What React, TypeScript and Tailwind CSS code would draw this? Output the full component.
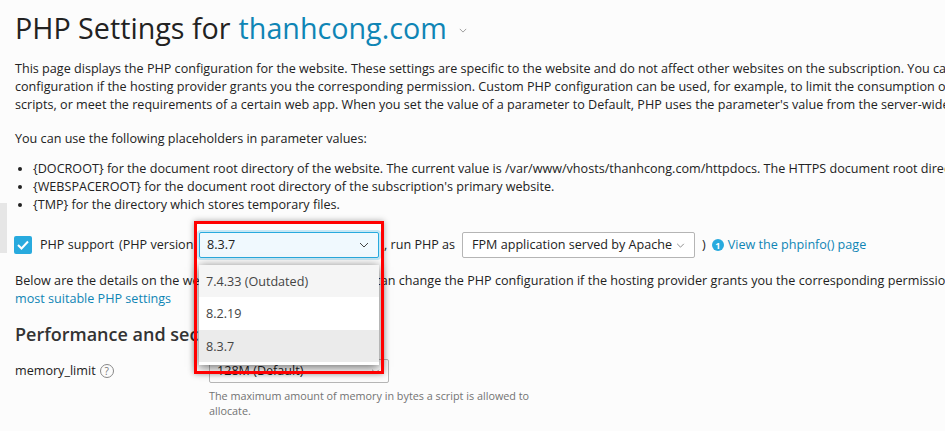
import React from 'react';

const Chevron: React.FC<{ className?: string }> = ({ className }) => (
  <svg className={className} viewBox="0 0 10 6" fill="none" stroke="currentColor" strokeWidth={1}>
    <path d="M1 1l4 4 4-4" />
  </svg>
);

const placeholders = [
  '{DOCROOT} for the document root directory of the website. The current value is /var/www/vhosts/thanhcong.com/httpdocs. The HTTPS document root directory is the same.',
  "{WEBSPACEROOT} for the document root directory of the subscription's primary website.",
  '{TMP} for the directory which stores temporary files.',
];

const VersionMenu: React.FC = () => (
  <>
    <div className="absolute left-[194px] top-[221px] w-[190px] h-[153px] border-[3px] border-[#ff0000] z-30 pointer-events-none shadow-[0_0_6px_rgba(0,0,0,0.35)]" />
    <div className="absolute left-[199px] top-[265px] w-[180px] h-[100px] bg-white z-20 text-[#444] shadow-[0_2px_10px_rgba(0,0,0,0.6)]">
      <div className="h-[32px] bg-[#f5f5f5] pl-[7px] leading-[33px]">7.4.33 (Outdated)</div>
      <div className="h-[33px] pl-[7px] leading-[33px]">8.2.19</div>
      <div className="h-[32px] bg-[#ebebeb] pl-[7px] leading-[33px]">8.3.7</div>
    </div>
  </>
);

export default function App() {
  return (
    <div className="relative w-[945px] h-[431px] overflow-hidden bg-[#fcfcfc] text-[12.6px] leading-[18px] text-[#222] font-['Open_Sans',sans-serif]">
      <div className="absolute left-0 top-[203px] w-[7px] h-[50px] bg-[#e6e6e6]" />
      <div className="pl-[15px] pt-[9px] whitespace-nowrap">
        <h1 className="flex items-center text-[28.7px] leading-[38px] text-[#222]">
          PHP Settings for <span className="ml-[8px] text-[#0f85b5]">thanhcong.com</span>
          <Chevron className="ml-[12px] mt-[5px] w-[8px] h-[5px] text-[#888]" />
        </h1>
        <div className="mt-[13px]">
          <p>This page displays the PHP configuration for the website. These settings are specific to the website and do not affect other websites on the subscription. You can</p>
          <p>configuration if the hosting provider grants you the corresponding permission. Custom PHP configuration can be used, for example, to limit the consumption of</p>
          <p>scripts, or meet the requirements of a certain web app. When you set the value of a parameter to Default, PHP uses the parameter's value from the server-wide</p>
        </div>
        <p className="mt-[16px]">You can use the following placeholders in parameter values:</p>
        <ul className="mt-[12px] list-disc pl-[18px]">
          {placeholders.map((text) => (
            <li key={text}>{text}</li>
          ))}
        </ul>
        <div className="mt-[18px] h-[26px] flex items-center">
          <span className="-ml-px w-[18px] h-[18px] bg-[#28aade] rounded-[2px] flex items-center justify-center">
            <svg className="w-[12px] h-[10px]" viewBox="0 0 12 10" fill="none" stroke="#fff" strokeWidth={2}>
              <path d="M1 5l3.5 3.5L11 1.5" />
            </svg>
          </span>
          <span className="ml-[8px] w-[72px]">PHP support</span>
          <span className="ml-[7px] w-[80px]">(PHP version</span>
          <div className="w-[180px] h-[26px] border border-[#28aade] bg-[#f0f9fe] rounded-[2px] shadow-[0_0_0_2px_rgba(40,170,222,0.25)] flex items-center justify-between pl-[7px] pr-[9px]">
            8.3.7
            <Chevron className="w-[10px] h-[6px] text-[#444]" />
          </div>
          <span className="ml-[5px] w-[78px]">, run PHP as</span>
          <div className="w-[233px] h-[26px] border border-[#b5b5b5] bg-white rounded-[2px] flex items-center justify-between pl-[9px] pr-[9px]">
            FPM application served by Apache
            <Chevron className="w-[9px] h-[5px] text-[#777]" />
          </div>
          <span className="ml-[7px]">)</span>
          <span className="ml-[6px] w-[12px] h-[12px] rounded-full bg-[#28aade] text-white text-[9px] font-bold leading-none flex items-center justify-center">1</span>
          <span className="ml-[4px] text-[#0f85b5]">View the phpinfo() page</span>
        </div>
        <div className="mt-[14px]">
          <p className="tracking-[0.02px]">Below are the details on the website's own PHP settings. You can change the PHP configuration if the hosting provider grants you the corresponding permission.</p>
          <p className="text-[#0f85b5]">most suitable PHP settings</p>
        </div>
        <h2 className="mt-[14px] text-[18px] leading-[24px] font-semibold text-[#333]">Performance and security settings</h2>
        <div className="mt-[13px] flex">
          <div className="w-[194px] h-[24px] flex items-center">
            memory_limit
            <span className="ml-[4px] w-[14px] h-[14px] rounded-full border border-[#888] text-[#777] text-[10px] leading-none flex items-center justify-center">?</span>
          </div>
          <div>
            <div className="w-[180px] h-[24px] border border-[#b5b5b5] rounded-[2px] flex items-center justify-between pl-[7px] pr-[8px]">
              128M (Default)
              <Chevron className="w-[9px] h-[5px] text-[#777]" />
            </div>
            <p className="mt-[5px] w-[325px] whitespace-normal text-[10.8px] leading-[15px] text-[#737373]">
              The maximum amount of memory in bytes a script is allowed to allocate.
            </p>
          </div>
        </div>
      </div>
      <VersionMenu />
    </div>
  );
}
